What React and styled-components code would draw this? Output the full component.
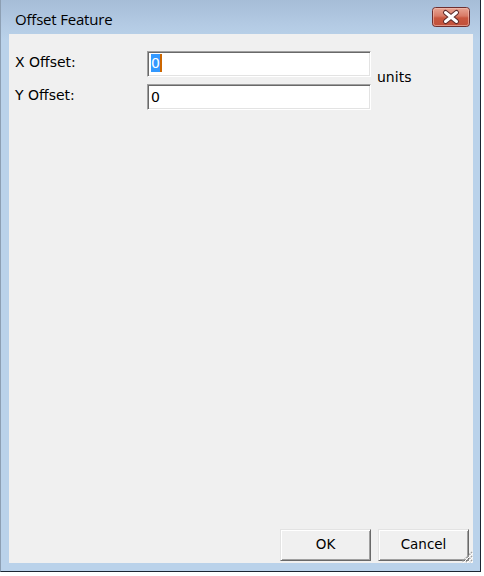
import styled, { createGlobalStyle } from 'styled-components'

const GlobalStyle = createGlobalStyle`
  html, body {
    margin: 0;
    padding: 0;
    background: #ffffff;
  }
`

const Window = styled.div`
  box-sizing: border-box;
  width: 481px;
  height: 572px;
  display: flex;
  flex-direction: column;
  padding: 0 7px 8px 8px;
  border-left: 1px solid #8d9fb3;
  border-right: 1px solid #1b2633;
  border-bottom: 1px solid #1b2633;
  background: linear-gradient(to bottom, #a6bdd7 0px, #b4cbe4 26px, #bad2ea 40px, #bad2ea 100%);
`

const TitleBar = styled.div`
  height: 34px;
  box-sizing: border-box;
  padding: 4px 3px 0 6px;
  display: flex;
  align-items: center;
  justify-content: space-between;
`

const Title = styled.span`
  font-family: "Open Sans", "DejaVu Sans", sans-serif;
  font-size: 15px;
  letter-spacing: -0.2px;
  color: #000000;
`

const CloseButton = styled.div`
  width: 38px;
  height: 20px;
  display: flex;
  margin-top: -4px;
`

const Client = styled.div`
  flex: 1;
  position: relative;
  display: flex;
  flex-direction: column;
  background: #f0f0f0;
  padding: 17px 4px 2px 6px;
  font-family: "DejaVu Sans", sans-serif;
  font-size: 14px;
  color: #000000;
`

const Form = styled.div`
  display: grid;
  grid-template-columns: 132px 224px auto;
  grid-template-rows: 26px 26px;
  row-gap: 7px;
`

const Label = styled.div`
  line-height: 22px;
  white-space: nowrap;
`

const TextBox = styled.div`
  box-sizing: border-box;
  height: 26px;
  display: flex;
  align-items: center;
  padding: 0 3px 0 3px;
  background: #ffffff;
  border: 1px solid;
  border-color: #a0a0a0 #ffffff #ffffff #a0a0a0;
  box-shadow: inset 1px 1px #696969, inset -1px -1px #e3e3e3;
  line-height: 18px;
`

const Selected = styled.span`
  display: inline-block;
  height: 18px;
  margin-top: -2px;
  background: #3399ff;
  color: #ffffff;
  border-right: 2px solid #cc6600;
`

const Units = styled.div`
  grid-column: 3;
  grid-row: 1 / span 2;
  align-self: center;
  margin-left: 6px;
  margin-bottom: 8px;
  line-height: 18px;
`

const Footer = styled.div`
  margin-top: auto;
  display: flex;
  justify-content: flex-end;
  gap: 7px;
`

const Button = styled.button`
  box-sizing: border-box;
  width: 91px;
  height: 32px;
  padding: 0 0 2px 0;
  font-family: "DejaVu Sans", sans-serif;
  font-size: 13.5px;
  color: #000000;
  background: #f0f0f0;
  border: 1px solid;
  border-color: #e3e3e3 #696969 #696969 #e3e3e3;
  box-shadow: inset 1px 1px #ffffff, inset -1px -1px #a0a0a0;
  border-radius: 0;
`

const Grip = styled.svg`
  position: absolute;
  right: 0;
  bottom: 0;
`

const CloseIcon = () => (
  <svg width="38" height="20" viewBox="0 0 38 20">
    <defs>
      <linearGradient id="closeFill" x1="0" y1="0" x2="0" y2="1">
        <stop offset="0" stopColor="#e9a897" />
        <stop offset="0.45" stopColor="#d87a66" />
        <stop offset="0.55" stopColor="#c9573f" />
        <stop offset="1" stopColor="#c0503a" />
      </linearGradient>
    </defs>
    <rect x="0.5" y="0.5" width="37" height="19" rx="3" fill="url(#closeFill)" stroke="#6e3030" />
    <rect x="1.5" y="1.5" width="35" height="17" rx="2" fill="none" stroke="#f2c2b6" strokeOpacity="0.6" />
    <path d="M13.5 5.5 L24.5 14.5 M24.5 5.5 L13.5 14.5" stroke="#5a2a2a" strokeWidth="5" strokeLinecap="round" />
    <path d="M13.5 5.5 L24.5 14.5 M24.5 5.5 L13.5 14.5" stroke="#ffffff" strokeWidth="3" strokeLinecap="round" />
  </svg>
)

const SizeGrip = () => (
  <Grip width="12" height="12" viewBox="0 0 12 12">
    <path d="M11 1 L1 11 M11 5 L5 11 M11 9 L9 11" stroke="#a0a0a0" strokeWidth="1.4" strokeDasharray="1.4 1" />
    <path d="M12 2 L2 12 M12 6 L6 12 M12 10 L10 12" stroke="#ffffff" strokeWidth="1" />
  </Grip>
)

export default function App() {
  return (
    <>
      <GlobalStyle />
      <Window>
        <TitleBar>
          <Title>Offset Feature</Title>
          <CloseButton>
            <CloseIcon />
          </CloseButton>
        </TitleBar>
        <Client>
          <Form>
            <Label>X Offset:</Label>
            <TextBox role="textbox">
              <Selected>0</Selected>
            </TextBox>
            <Units>units</Units>
            <Label>Y Offset:</Label>
            <TextBox role="textbox">0</TextBox>
          </Form>
          <Footer>
            <Button>OK</Button>
            <Button>Cancel</Button>
          </Footer>
          <SizeGrip />
        </Client>
      </Window>
    </>
  )
}
